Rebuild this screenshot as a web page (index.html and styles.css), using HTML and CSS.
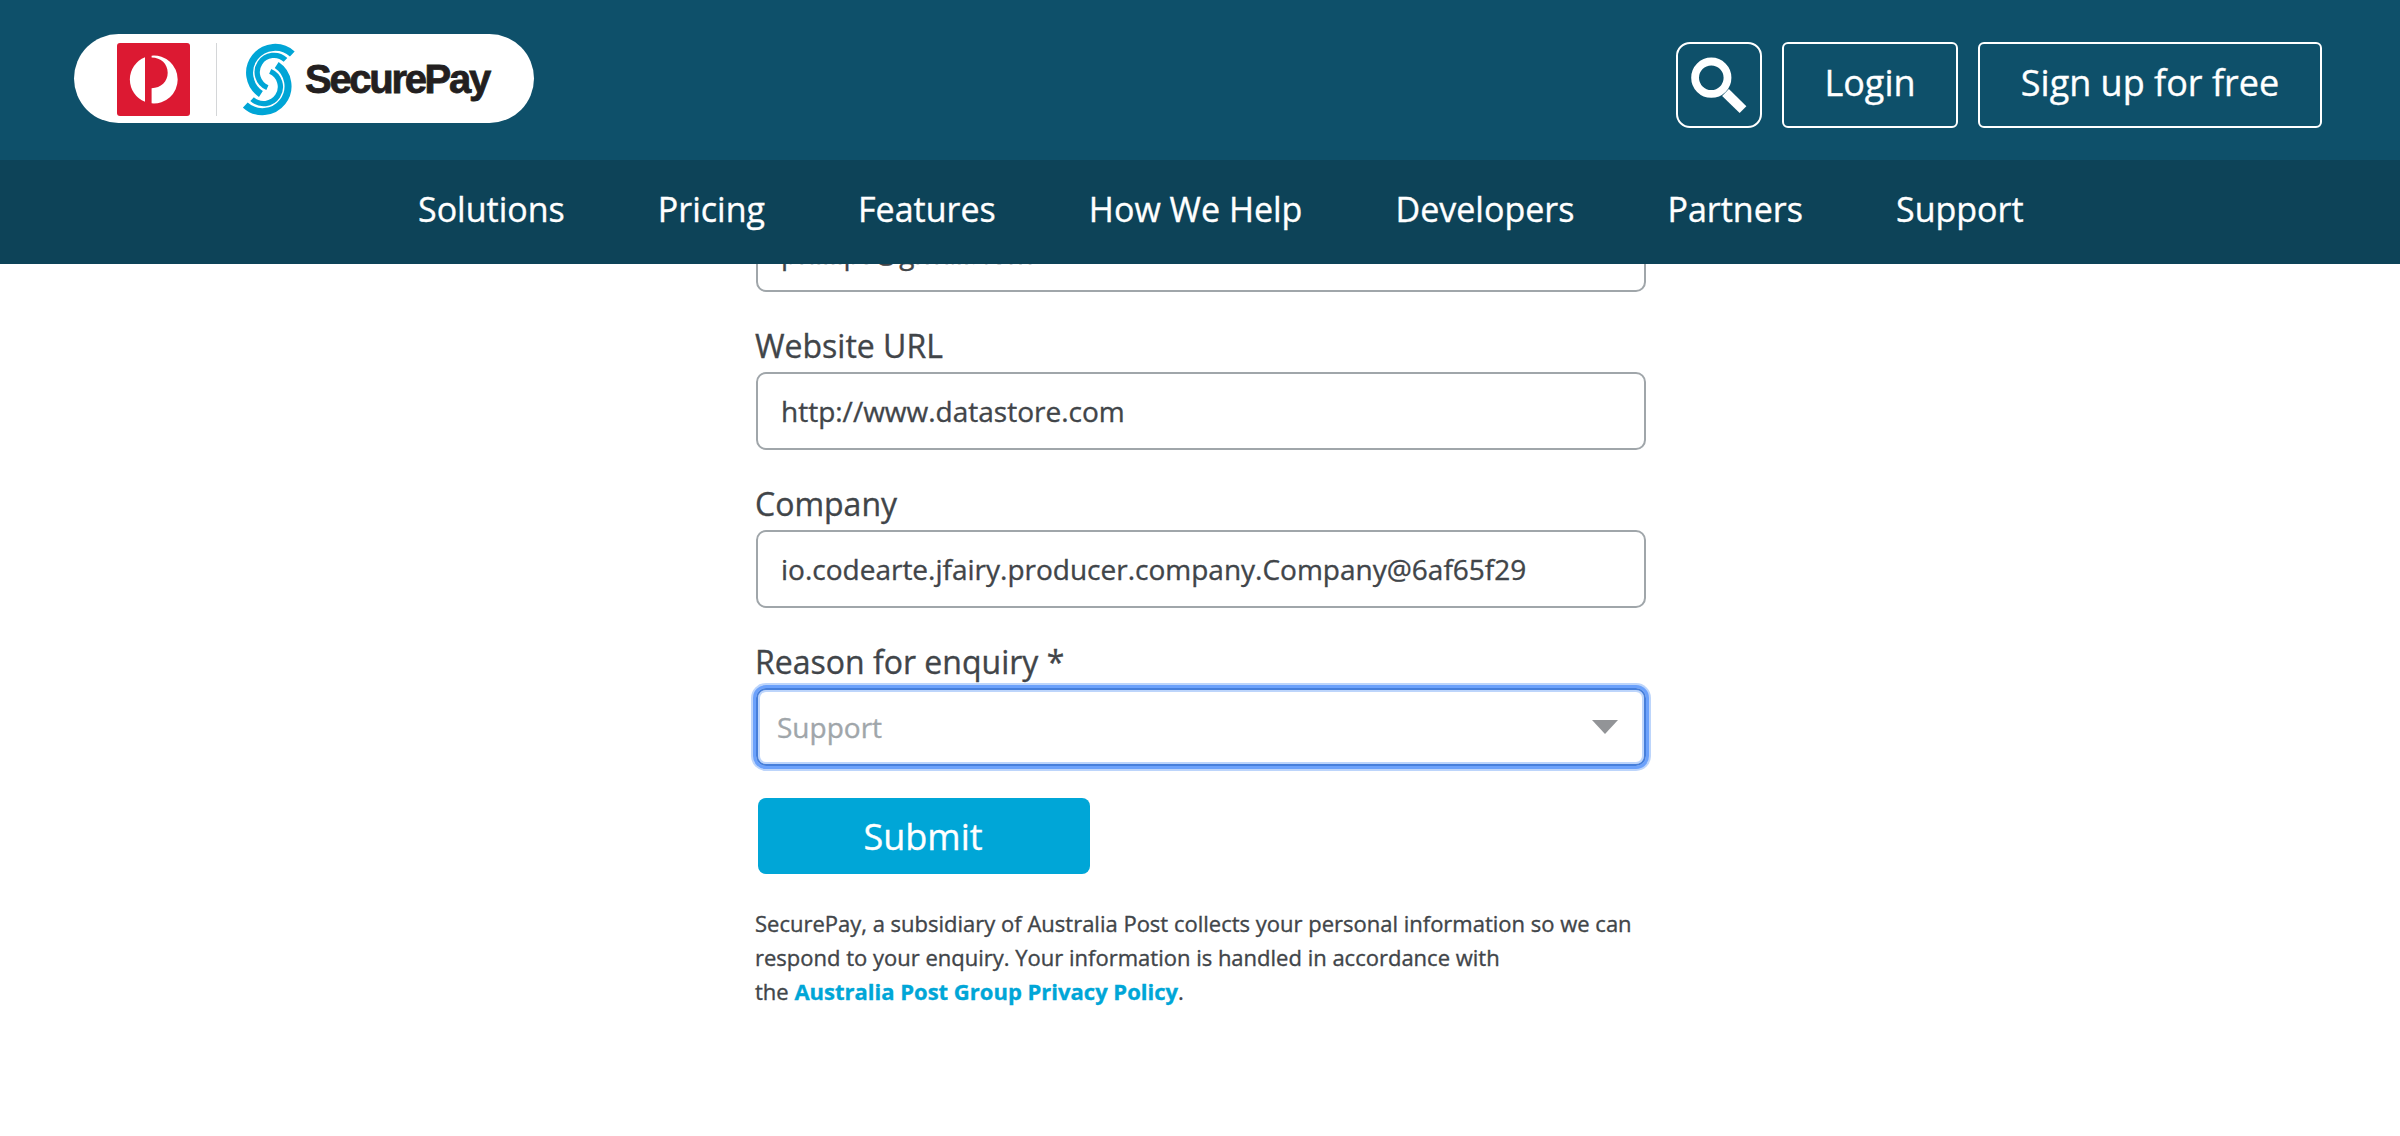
FILE: index.html
```html
<!DOCTYPE html>
<html lang="en">
<head>
<meta charset="utf-8">
<title>SecurePay</title>
<link rel="stylesheet" href="styles.css">
</head>
<body>
<header class="header">
  <div class="topbar">
    <a class="brand">
      <svg class="post" viewBox="0 0 73 73"><rect width="73" height="73" rx="3" fill="#dc1932"/><path d="M28 14.200A24 24 0 0 0 28 58.800Z" fill="#fff"/><path d="M34.600 12.700A23.900 23.900 0 1 1 34.600 60.300V45.300C44 45 50.700 38.500 50.700 29.800C50.700 21 44 14.500 34.600 14.500Z" fill="#fff"/></svg>
      <span class="divider"></span>
      <svg class="mark" viewBox="0 0 52 73">
        <g fill="none" stroke="#00a5d6">
          <path d="M49.300 11A25.500 25.500 0 1 0 17.900 51" stroke-width="7"/>
          <path d="M42.500 16.900A16.800 16.800 0 1 0 24.400 44.600" stroke-width="5.300"/>
          <g transform="rotate(180 25.800 36.500)">
            <path d="M49.300 11A25.500 25.500 0 1 0 17.900 51" stroke-width="7"/>
            <path d="M42.500 16.900A16.800 16.800 0 1 0 24.400 44.600" stroke-width="5.300"/>
          </g>
        </g>
      </svg>
      <span class="wordmark">SecurePay</span>
    </a>
    <div class="actions">
      <button class="search" aria-label="Search"><svg viewBox="0 0 82 82"><circle cx="33.300" cy="33.700" r="16.200" fill="none" stroke="#fff" stroke-width="7.800"/><path d="M47.500 48.500L65 65.700" stroke="#fff" stroke-width="9.600"/></svg></button>
      <a class="btn login">Login</a>
      <a class="btn signup">Sign up for free</a>
    </div>
  </div>
  <nav class="nav"><a>Solutions</a><a>Pricing</a><a>Features</a><a>How We Help</a><a>Developers</a><a>Partners</a><a>Support</a></nav>
</header>
<main class="form">
  <div class="field clipped"><div class="input">phillips@gmail.com</div></div>
  <div class="field"><label>Website URL</label><div class="input">http://www.datastore.com</div></div>
  <div class="field"><label>Company</label><div class="input">io.codearte.jfairy.producer.company.Company@6af65f29</div></div>
  <div class="field"><label>Reason for enquiry *</label><div class="input select"><span>Support</span><svg class="caret" viewBox="0 0 26 14"><path d="M0 0H26L13 14Z" fill="#929497"/></svg></div></div>
  <button class="submit">Submit</button>
  <p class="note">SecurePay, a subsidiary of Australia Post collects your personal information so we can<br>respond to your enquiry. Your information is handled in accordance with<br>the <a>Australia Post Group Privacy Policy</a>.</p>
</main>
</body>
</html>
```
FILE: styles.css
```css
* { box-sizing: border-box; }
body { margin: 0; height: 1136px; overflow: hidden; background: #fff; color: #414549; font-family: "Open Sans", "Noto Sans", sans-serif; -webkit-text-stroke: .35px currentColor; }
button { font: inherit; }
.header { position: relative; z-index: 2; color: #fff; }
.topbar { height: 160px; background: #0e506a; display: flex; justify-content: space-between; align-items: flex-start; padding: 34px 78px 0 74px; }
.brand { width: 460px; height: 89px; border-radius: 45px; background: #fff; display: flex; align-items: center; padding: 1px 0 0 43px; }
.post { width: 73px; height: 73px; }
.divider { width: 1px; height: 73px; margin: 0 26px; background: #d4d6d8; }
.mark { width: 52px; height: 73px; }
.wordmark { margin-left: 10px; font: bold 40px/40px "Liberation Sans", sans-serif; letter-spacing: -2.3px; color: #231f20; -webkit-text-stroke: .8px #231f20; }
.actions { display: flex; margin-top: 8px; height: 86px; }
.search { width: 86px; padding: 0; border: 2px solid #fff; border-radius: 14px; background: none; }
.search svg { display: block; width: 82px; height: 82px; }
.btn { display: flex; justify-content: center; border: 2px solid #fff; border-radius: 6px; font-size: 36px; line-height: 78px; }
.login { width: 176px; margin-left: 20px; }
.signup { width: 344px; margin-left: 20px; }
.nav { height: 104px; background: #0d4358; display: flex; padding-left: 418px; gap: 93.1px; font-size: 34px; line-height: 98px; white-space: nowrap; }
.form { width: 890px; margin: -50px 0 0 756px; }
.field { height: 158px; padding-top: 34px; }
.field label { display: block; height: 46px; margin-left: -1px; font-size: 32px; line-height: 40px; }
.clipped { height: 78px; padding: 0; }
.input { height: 78px; border: 2px solid #a0a6aa; border-radius: 10px; padding-left: 23px; font-size: 28px; line-height: 74px; }
.select { display: flex; justify-content: space-between; align-items: center; border-color: #467fdb; padding: 0 26px 0 19px; color: #a0a6aa; box-shadow: 0 0 0 3px #6ba1fb, 0 0 0 5px #bdd5fb, inset 0 0 0 2px #bdd5fb; }
.caret { width: 26px; height: 14px; }
.submit { display: block; width: 332px; height: 76px; margin: 32px 0 0 2px; border: 0; border-radius: 8px; padding: 1px 2px 0 0; background: #00a6d7; color: #fff; font-size: 36px; line-height: 76px; }
.note { margin: 32px 0 0 -1px; font-size: 22px; line-height: 34px; white-space: nowrap; }
.note a { color: #00a6d7; font-weight: 700; }
```
